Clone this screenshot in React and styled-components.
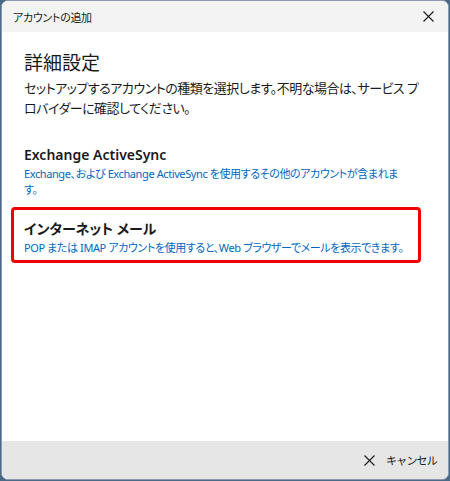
import React from 'react';
import styled, { createGlobalStyle } from 'styled-components';

const GlobalStyle = createGlobalStyle`
	html, body {
		margin: 0;
		padding: 0;
		background: #4a6a88;
	}
	body {
		font-family: 'Noto Sans', 'Noto Sans CJK JP', sans-serif;
		font-feature-settings: 'palt';
	}
`;

const Window = styled.div`
	margin-left: 1px;
	width: 446px;
	height: 478px;
	display: flex;
	flex-direction: column;
	background: #fff;
	border: 1px solid #8c9bab;
	border-radius: 7px;
	overflow: hidden;
`;

const TitleBar = styled.div`
	height: 31px;
	flex: none;
	display: flex;
	align-items: center;
	justify-content: space-between;
	padding: 0 14px 0 11px;
	background: #f3f3f3;
	font-size: 11px;
	letter-spacing: -0.3px;
	color: #1a1a1a;
`;

const Body = styled.div`
	flex: 1;
	padding: 18px 0 0 22px;
	display: flex;
	flex-direction: column;
`;

const Heading = styled.h1`
	margin: 0;
	font-size: 19px;
	font-weight: 400;
	line-height: 26px;
	color: #1a1a1a;
`;

const Intro = styled.p`
	margin: 2px 0 0;
	width: 406px;
	font-size: 13px;
	letter-spacing: -0.5px;
	line-height: 20px;
	color: #1a1a1a;
`;

const Options = styled.div`
	margin-top: 27px;
	display: flex;
	flex-direction: column;
	gap: 9px;
`;

const Option = styled.div`
	margin-left: ${p => (p.selected ? '-13px' : '0')};
	width: ${p => (p.selected ? '394px' : '378px')};
	padding: ${p => (p.selected ? '9px 0 4px 10px' : '0')};
	border: ${p => (p.selected ? '3px solid #f00000' : 'none')};
	border-radius: 4px;
`;

const OptionName = styled.div`
	font-size: 14px;
	font-weight: 600;
	line-height: 19px;
	color: #1a1a1a;
`;

const OptionDesc = styled.div`
	margin-top: 2px;
	font-size: 11px;
	letter-spacing: -0.4px;
	line-height: 16px;
	color: #0067c0;
`;

const Footer = styled.div`
	height: 38px;
	flex: none;
	display: flex;
	align-items: center;
	justify-content: flex-end;
	padding: 0 11px 0 0;
	background: #e6e6e6;
`;

const CancelButton = styled.button`
	display: flex;
	align-items: center;
	gap: 11px;
	padding: 0;
	border: none;
	background: none;
	font-family: inherit;
	font-size: 11px;
	letter-spacing: -0.8px;
	color: #1a1a1a;
`;

const Cross = ({ size = 11 }) => (
	<svg width={size} height={size} viewBox='0 0 11 11' fill='none' stroke='#1a1a1a' strokeWidth='1.1'>
		<path d='M0.5 0.5 L10.5 10.5 M10.5 0.5 L0.5 10.5' />
	</svg>
);

const options = [
	{
		name: 'Exchange ActiveSync',
		desc: 'Exchange、および Exchange ActiveSync を使用するその他のアカウントが含まれます。',
	},
	{
		name: 'インターネット メール',
		desc: 'POP または IMAP アカウントを使用すると、Web ブラウザーでメールを表示できます。',
		selected: true,
	},
];

export default function App() {
	return (
		<>
			<GlobalStyle />
			<Window>
				<TitleBar>
					<span>アカウントの追加</span>
					<Cross />
				</TitleBar>
				<Body>
					<Heading>詳細設定</Heading>
					<Intro>
						セットアップするアカウントの種類を選択します。不明な場合は、サービス プロバイダーに確認してください。
					</Intro>
					<Options>
						{options.map(o => (
							<Option key={o.name} selected={o.selected}>
								<OptionName>{o.name}</OptionName>
								<OptionDesc>{o.desc}</OptionDesc>
							</Option>
						))}
					</Options>
				</Body>
				<Footer>
					<CancelButton>
						<Cross />
						キャンセル
					</CancelButton>
				</Footer>
			</Window>
		</>
	);
}
